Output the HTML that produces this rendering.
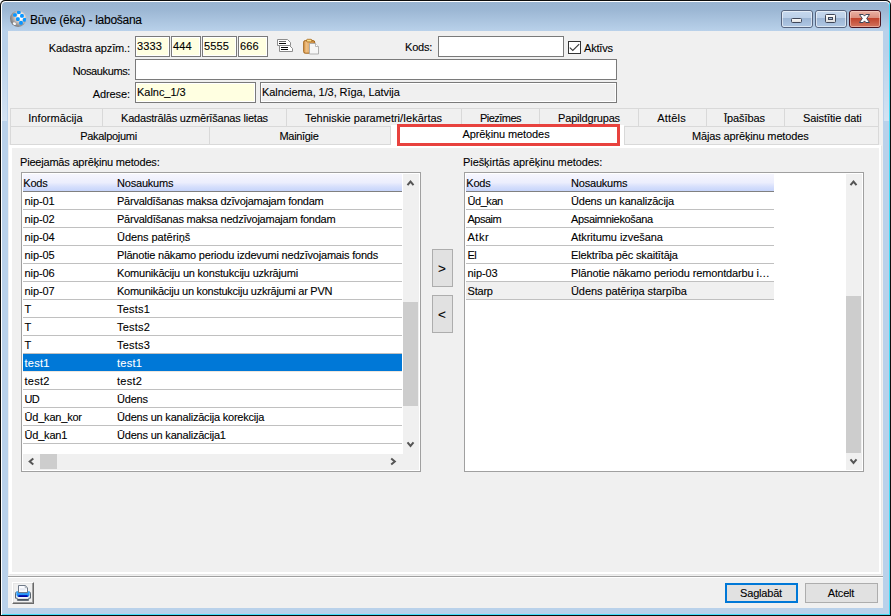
<!DOCTYPE html>
<html lang="lv">
<head>
<meta charset="utf-8">
<title>Būve (ēka) - labošana</title>
<style>
html,body{margin:0;padding:0;background:#fff;}
body{width:891px;height:616px;position:relative;overflow:hidden;font-family:"Liberation Sans",sans-serif;font-size:11px;color:#000;letter-spacing:-0.2px;-webkit-text-stroke:0.1px currentColor;}
*{box-sizing:border-box;}
.abs,.win div,.win span,.win svg{position:absolute;}
.win{position:absolute;left:0;top:0;width:891px;height:616px;background:#0c0c0c;border-radius:5px 5px 0 0;overflow:hidden;}
.hl{left:1px;top:1px;width:889px;height:614px;border-radius:4.5px 4.5px 0 0;background:#fff;}
.hl2{left:2px;top:2px;width:888px;height:613px;border-radius:4px 4.5px 0 0;background:#45dcf7;}
.frame{left:2px;top:2px;width:887px;height:612px;border-radius:4px 3.5px 0 0;background:linear-gradient(to bottom,#99b4d1 0,#9cb7d4 8px,#b9d1ea 29px,#b9d1ea 100%);}
.lfade{top:50px;width:5px;height:71px;background:linear-gradient(to bottom,rgba(255,255,255,0),rgba(255,255,255,.38));}
.title{left:30px;top:11px;font-size:12px;line-height:18px;white-space:nowrap;color:#000;letter-spacing:-0.27px;}
.client{left:8px;top:31px;width:875px;height:577px;background:#f0f0f0;}
.cap{top:10px;height:18px;border-radius:3px;border:1px solid #56647e;}
.cap i{position:absolute;left:0;top:0;right:0;bottom:0;border-radius:2px;border:1px solid rgba(255,255,255,.55);}
.cap.n{background:linear-gradient(to bottom,#c6d8ee 0,#bcd0e8 43%,#9cb5d4 44%,#b0c8e4 100%);}
.cap.x{border-color:#4a1420;background:linear-gradient(to bottom,#eab1a3 0,#dc8f7e 43%,#c0412a 44%,#d2745e 100%);}
.cap.x i{border-color:rgba(255,220,210,.5);}
.lbl{white-space:nowrap;line-height:13px;}
.lbl.r{left:0;width:130px;text-align:right;}
.inp{height:21px;border:1px solid #7a7a7a;background:#fff;white-space:nowrap;overflow:hidden;}
.inp b{position:absolute;left:1px;top:1px;right:1px;bottom:1px;background:#ffffe1;font-weight:normal;}
.inp.ro b{background:#f0f0f0;}
.inp span{left:1px;top:3px;line-height:13px;}
.tab{border:1px solid #d9d9d9;background:#f0f0f0;text-align:center;line-height:13px;padding-top:3px;white-space:nowrap;}
.page{left:9px;top:145px;width:872px;height:429px;background:#fff;box-shadow:1px 1px 0 #e6e6e6;}
.page .in{left:3px;top:3px;width:867px;height:424px;background:#f0f0f0;}
.list{border:1px solid #a0a0a0;background:#fff;overflow:hidden;}
.hdr{left:1px;top:1px;height:18px;background:linear-gradient(to bottom,#f6f6fe 0,#eceefd 50%,#d6dffc 75%,#c6d4fb 100%);border-bottom:1px solid #808080;}
.hdr span{top:3px;line-height:13px;}
.row{left:1px;height:18px;border-bottom:1px solid #c0c0c0;white-space:nowrap;}
.row{right:0;}
.rows{overflow:hidden;}
.row span{top:3px;line-height:13px;}
.row .c1{left:1.5px;}
.row .c2{left:94px;}
.rows.r .c2{left:105px;}
.row.sel{background:#0078d7;color:#fff;border-bottom-color:#efe6dd;}
.row.gray{background:#f0f0f0;}
.sb{background:#f0f0f0;}
.thumb{background:#cdcdcd;}
.btn{border:1px solid #adadad;background:#e1e1e1;text-align:center;white-space:nowrap;}
</style>
</head>
<body>
<div class="win">
<div class="hl"></div>
<div style="left:889px;top:3px;width:1px;height:612px;background:#45dcf7"></div>
<div style="left:2px;top:614px;width:888px;height:1px;background:#45dcf7"></div>
<div class="frame"></div>
<div class="lfade" style="left:2px"></div>
<div class="lfade" style="left:884px"></div>

<!-- app icon -->
<svg style="left:9px;top:10px" width="18" height="18" viewBox="0 0 18 18">
<defs><radialGradient id="ball" cx="0.64" cy="0.38" r="0.72"><stop offset="0" stop-color="#ffffff"/><stop offset="0.2" stop-color="#ffffff"/><stop offset="0.42" stop-color="#dccfc8"/><stop offset="0.75" stop-color="#929295"/><stop offset="1" stop-color="#6f6f73"/></radialGradient>
<clipPath id="bc"><circle cx="9.1" cy="8.8" r="8"/></clipPath></defs>
<circle cx="9.1" cy="8.8" r="8.1" fill="url(#ball)"/>
<ellipse cx="5.4" cy="13.6" rx="1.7" ry="1.2" fill="#fff" opacity=".95" transform="rotate(30 5.4 13.6)"/>
<g fill="#0a96ff" clip-path="url(#bc)">
<rect x="4.11" y="3.14" width="3.7" height="3.7" rx="1.3"/><rect x="8.01" y="0.41" width="3.7" height="3.7" rx="1.3"/><rect x="11.12" y="4.11" width="3.7" height="3.7" rx="1.3"/>
<rect x="7.03" y="7.23" width="3.7" height="3.7" rx="1.3"/><rect x="10.15" y="11.12" width="3.7" height="3.7" rx="1.3"/><rect x="13.85" y="8.01" width="3.7" height="3.7" rx="1.3"/>
</g>
</svg>
<div class="title">Būve (ēka) - labošana</div>

<!-- caption buttons -->
<div class="cap n" style="left:781px;width:32px"><i></i>
<svg style="left:8px;top:6px" width="13" height="7" viewBox="0 0 13 7"><defs><linearGradient id="gw" x1="0" x2="0" y1="0" y2="1"><stop offset="0" stop-color="#ffffff"/><stop offset="1" stop-color="#dcdcdc"/></linearGradient></defs><rect x="1.5" y="1.5" width="10" height="4" rx="1" fill="url(#gw)" stroke="#3f4658" stroke-width="1"/></svg></div>
<div class="cap n" style="left:815px;width:32px"><i></i>
<svg style="left:8px;top:2px" width="13" height="11" viewBox="0 0 13 11"><rect x="1.5" y="1.5" width="10" height="8" rx="1" fill="url(#gw)" stroke="#3f4658" stroke-width="1"/><rect x="4.5" y="4.5" width="4" height="2" fill="#a9c0dc" stroke="#3f4658" stroke-width="1"/></svg></div>
<div class="cap x" style="left:849px;width:32px"><i></i>
<svg style="left:8px;top:2px" width="13" height="11" viewBox="-1 -1 13 11"><path d="M0.5 0.5 H4.2 L5.5 2.1 L6.8 0.5 H10.5 L7.7 4.5 L10.5 8.5 H6.8 L5.5 6.9 L4.2 8.5 H0.5 L3.3 4.5 Z" fill="#fff" stroke="#3d4659" stroke-width="1" stroke-linejoin="round"/></svg></div>

<div class="client">
</div>

<!-- form -->
<div class="lbl r" style="top:42px;letter-spacing:-0.12px">Kadastra apzīm.:</div>
<div class="inp" style="left:135px;top:36px;width:35px"><b></b><span style="letter-spacing:0.1px">3333</span></div>
<div class="inp" style="left:171px;top:36px;width:30px"><b></b><span style="letter-spacing:0.1px">444</span></div>
<div class="inp" style="left:202px;top:36px;width:35px"><b></b><span style="letter-spacing:0.1px">5555</span></div>
<div class="inp" style="left:238px;top:36px;width:30px"><b></b><span style="letter-spacing:0.1px">666</span></div>

<!-- copy icon -->
<svg style="left:277px;top:39px" width="17" height="14" viewBox="0 0 17 14">
<path d="M0.5 0.5 H10.5 L13.5 3.5 V6.5 H0.5 Z" fill="#fff" stroke="#8c8c8c"/>
<path d="M2.5 6.5 H12.5 L15.5 9.5 V12.5 H2.5 Z" fill="#fff" stroke="#8c8c8c"/>
<path d="M2 2.5 H9" stroke="#666" stroke-width="1"/>
<path d="M2 4.5 H9 M4 8.5 H11 M4 10.5 H11" stroke="#0a0a0a" stroke-width="1"/>
</svg>
<!-- paste icon -->
<svg style="left:303px;top:38px" width="17" height="17" viewBox="0 0 17 17">
<defs><linearGradient id="clip" x1="0" x2="1" y1="0" y2="0"><stop offset="0" stop-color="#d99a4c"/><stop offset="0.25" stop-color="#efc085"/><stop offset="1" stop-color="#c8893a"/></linearGradient></defs>
<rect x="0.7" y="2.6" width="11" height="12.6" rx="1.5" fill="url(#clip)" stroke="#a3651a" stroke-width="1"/>
<rect x="3.6" y="1.3" width="5.2" height="2.6" rx=".8" fill="#fbe08c" stroke="#a3651a" stroke-width=".8"/>
<path d="M6.5 5.5 H12.5 L15.5 8.5 V16 H6.5 Z" fill="#f6f6f6" stroke="#a8a8a8" stroke-width=".9"/>
<path d="M12.5 5.5 V8.5 H15.5" fill="#fff" stroke="#a8a8a8" stroke-width=".8"/>
</svg>

<div class="lbl" style="left:405px;top:41px">Kods:</div>
<div class="inp" style="left:438px;top:36px;width:126px"></div>
<div style="left:568px;top:41px;width:13px;height:13px;border:1px solid #333;background:#fff"></div>
<svg style="left:568px;top:41px" width="13" height="13" viewBox="0 0 13 13"><path d="M1.8 6.6 L4.8 9.5 L11.2 3.1" fill="none" stroke="#3a3a3a" stroke-width="1.1"/></svg>
<div class="lbl" style="left:584px;top:42px">Aktīvs</div>

<div class="lbl r" style="top:65px;letter-spacing:-0.38px">Nosaukums:</div>
<div class="inp" style="left:135px;top:59px;width:482px"></div>

<div class="lbl r" style="top:88px;letter-spacing:-0.1px">Adrese:</div>
<div class="inp" style="left:135px;top:82px;width:121px"><b></b><span style="letter-spacing:-0.03px">Kalnc_1/3</span></div>
<div class="inp ro" style="left:260px;top:82px;width:357px"><b></b><span style="letter-spacing:-0.08px">Kalnciema, 1/3, Rīga, Latvija</span></div>

<!-- tabs -->
<div class="tab" style="left:10px;top:108px;width:93px;height:19px;letter-spacing:0.07px;padding-right:2px">Informācija</div>
<div class="tab" style="left:102px;top:108px;width:185px;height:19px">Kadastrālās uzmērīšanas lietas</div>
<div class="tab" style="left:286px;top:108px;width:176px;height:19px;letter-spacing:-0.02px;padding-right:1px">Tehniskie parametri/Iekārtas</div>
<div class="tab" style="left:461px;top:108px;width:79px;height:19px;letter-spacing:-0.53px">Piezīmes</div>
<div class="tab" style="left:539px;top:108px;width:100px;height:19px">Papildgrupas</div>
<div class="tab" style="left:638px;top:108px;width:69px;height:19px;letter-spacing:0.2px;padding-right:2px">Attēls</div>
<div class="tab" style="left:706px;top:108px;width:79px;height:19px;letter-spacing:-0.08px;padding-right:2px">Īpašības</div>
<div class="tab" style="left:784px;top:108px;width:95px;height:19px;letter-spacing:-0.1px;padding-left:1.5px">Saistītie dati</div>
<div class="tab" style="left:10px;top:126px;width:200px;height:19px;letter-spacing:-0.3px;padding-right:3px">Pakalpojumi</div>
<div class="tab" style="left:209px;top:126px;width:182px;height:19px;letter-spacing:-0.33px;padding-right:2px">Mainīgie</div>
<div class="tab" style="left:624px;top:126px;width:255px;height:19px;letter-spacing:-0.15px;padding-right:2.5px">Mājas aprēķinu metodes</div>
<div class="page"><div class="in"></div></div>
<div style="left:391px;top:125px;width:233px;height:22px;background:#fff;"></div>
<div style="left:397px;top:124px;width:223px;height:22px;border:3px solid #e8423e;background:#fff;text-align:center;line-height:14px;white-space:nowrap;padding-right:5px;letter-spacing:-0.1px">Aprēķinu metodes</div>

<!-- left list -->
<div class="lbl" style="left:20px;top:156px">Pieejamās aprēķinu metodes:</div>
<div class="list" style="left:21px;top:172px;width:400px;height:300px">
<div class="hdr" style="width:379px"><span style="left:0.3px">Kods</span><span style="left:94px">Nosaukums</span></div>
<div class="rows" style="left:0;top:0;width:380px;height:298px">
<div class="row" style="top:19px"><span class="c1" style="letter-spacing:-0.08px">nip-01</span><span class="c2" style="letter-spacing:-0.24px">Pārvaldīšanas maksa dzīvojamajam fondam</span></div>
<div class="row" style="top:37px"><span class="c1" style="letter-spacing:-0.08px">nip-02</span><span class="c2" style="letter-spacing:-0.235px">Pārvaldīšanas maksa nedzīvojamajam fondam</span></div>
<div class="row" style="top:55px"><span class="c1" style="letter-spacing:-0.08px">nip-04</span><span class="c2" style="letter-spacing:-0.06px">Ūdens patēriņš</span></div>
<div class="row" style="top:73px"><span class="c1" style="letter-spacing:-0.08px">nip-05</span><span class="c2">Plānotie nākamo periodu izdevumi nedzīvojamais fonds</span></div>
<div class="row" style="top:91px"><span class="c1" style="letter-spacing:-0.08px">nip-06</span><span class="c2">Komunikāciju un konstukciju uzkrājumi</span></div>
<div class="row" style="top:109px"><span class="c1" style="letter-spacing:-0.08px">nip-07</span><span class="c2" style="letter-spacing:-0.265px">Komunikāciju un konstukciju uzkrājumi ar PVN</span></div>
<div class="row" style="top:127px"><span class="c1">T</span><span class="c2" style="letter-spacing:0.2px">Tests1</span></div>
<div class="row" style="top:145px"><span class="c1">T</span><span class="c2" style="letter-spacing:0.2px">Tests2</span></div>
<div class="row" style="top:163px"><span class="c1">T</span><span class="c2" style="letter-spacing:0.2px">Tests3</span></div>
<div class="row sel" style="top:181px"><span class="c1" style="letter-spacing:0.25px">test1</span><span class="c2" style="letter-spacing:0.25px">test1</span></div>
<div class="row" style="top:199px"><span class="c1" style="letter-spacing:0.25px">test2</span><span class="c2" style="letter-spacing:0.25px">test2</span></div>
<div class="row" style="top:217px"><span class="c1" style="letter-spacing:-0.7px">UD</span><span class="c2">Ūdens</span></div>
<div class="row" style="top:235px"><span class="c1">Ūd_kan_kor</span><span class="c2">Ūdens un kanalizācija korekcija</span></div>
<div class="row" style="top:253px"><span class="c1">Ūd_kan1</span><span class="c2">Ūdens un kanalizācija1</span></div>
</div>
<div class="sb" style="left:381px;top:1px;width:16px;height:280px"></div>
<div class="thumb" style="left:381px;top:129px;width:15px;height:104px"></div>
<svg style="left:383px;top:6px" width="10" height="8" viewBox="-0.5 0 10 8"><path d="M2 6.2 L5 2.6 L8 6.2" fill="none" stroke="#555" stroke-width="2"/></svg>
<svg style="left:383px;top:268px" width="10" height="8" viewBox="-0.5 0 10 8"><path d="M2 1.4 L5 5 L8 1.4" fill="none" stroke="#555" stroke-width="2"/></svg>
<div class="sb" style="left:1px;top:281px;width:396px;height:16px"></div>
<div class="thumb" style="left:18px;top:281px;width:17px;height:15px"></div>
<svg style="left:5px;top:283px" width="9" height="11" viewBox="-0.5 -0.5 9 11"><path d="M5.8 2 L2.2 5 L5.8 8" fill="none" stroke="#555" stroke-width="2"/></svg>
<svg style="left:367px;top:283px" width="8" height="11" viewBox="0 -0.5 8 11"><path d="M2.2 2 L5.8 5 L2.2 8" fill="none" stroke="#555" stroke-width="2"/></svg>
</div>

<!-- move buttons -->
<div class="btn" style="left:432px;top:249px;width:21px;height:38px;line-height:37px;font-size:13.5px;letter-spacing:0;padding-right:1px">&gt;</div>
<div class="btn" style="left:432px;top:295px;width:21px;height:38px;line-height:37px;font-size:13.5px;letter-spacing:0;padding-right:1px">&lt;</div>

<!-- right list -->
<div class="lbl" style="left:463px;top:156px;letter-spacing:-0.07px">Piešķirtās aprēķinu metodes:</div>
<div class="list" style="left:464px;top:172px;width:400px;height:300px">
<div class="hdr" style="width:308px"><span style="left:0.3px">Kods</span><span style="left:105px">Nosaukums</span></div>
<div class="rows r" style="left:0;top:0;width:309px;height:298px">
<div class="row" style="top:19px"><span class="c1" style="letter-spacing:-0.45px">Ūd_kan</span><span class="c2">Ūdens un kanalizācija</span></div>
<div class="row" style="top:37px"><span class="c1" style="letter-spacing:-0.5px">Apsaim</span><span class="c2" style="letter-spacing:-0.33px">Apsaimniekošana</span></div>
<div class="row" style="top:55px"><span class="c1" style="letter-spacing:0.5px">Atkr</span><span class="c2" style="letter-spacing:-0.06px">Atkritumu izvešana</span></div>
<div class="row" style="top:73px"><span class="c1" style="letter-spacing:-0.5px">El</span><span class="c2" style="letter-spacing:-0.16px">Elektrība pēc skaitītāja</span></div>
<div class="row" style="top:91px"><span class="c1" style="letter-spacing:-0.08px">nip-03</span><span class="c2" style="letter-spacing:-0.13px">Plānotie nākamo periodu remontdarbu i…</span></div>
<div class="row gray" style="top:109px"><span class="c1">Starp</span><span class="c2" style="letter-spacing:-0.07px">Ūdens patēriņa starpība</span></div>
</div>
<div class="sb" style="left:381px;top:1px;width:16px;height:296px"></div>
<div class="thumb" style="left:381px;top:123px;width:15px;height:157px"></div>
<svg style="left:383px;top:6px" width="10" height="8" viewBox="-0.5 0 10 8"><path d="M2 6.2 L5 2.6 L8 6.2" fill="none" stroke="#555" stroke-width="2"/></svg>
<svg style="left:383px;top:285px" width="10" height="8" viewBox="-0.5 0 10 8"><path d="M2 1.4 L5 5 L8 1.4" fill="none" stroke="#555" stroke-width="2"/></svg>
</div>

<!-- bottom -->
<div style="left:8px;top:576px;width:875px;height:1px;background:#a0a0a0"></div>
<div style="left:8px;top:577px;width:875px;height:1px;background:#fff"></div>
<div style="left:12px;top:582px;width:22px;height:22px;background:#f0f0f0;border-top:1px solid #fff;border-left:1px solid #fff;border-right:1px solid #696969;border-bottom:1px solid #696969;box-shadow:inset -1px -1px 0 #a0a0a0, inset 1px 1px 0 #e6e6e6;">
<svg style="left:2px;top:2px" width="16" height="16" viewBox="0 0 16 16">
<defs><linearGradient id="pb" x1="0" x2="0" y1="0" y2="1"><stop offset="0" stop-color="#3fb0ff"/><stop offset="1" stop-color="#1480f5"/></linearGradient></defs>
<path d="M0.5 8.2 Q0.5 7.2 1.5 7.2 H14.5 Q15.5 7.2 15.5 8.2 V13.2 H13.6 V15.4 H2.4 V13.2 H0.5 Z" fill="#e9eef3" stroke="#4a5560" stroke-width=".9"/>
<path d="M1.4 6.2 H3.2 V7.6 H12.8 V6.2 H14.6 V9.6 Q14.6 12 12.4 12 H3.6 Q1.4 12 1.4 9.6 Z" fill="url(#pb)"/>
<rect x="3.4" y="10.2" width="9.2" height="1.8" fill="#0006a6"/>
<path d="M3.5 0.5 H10.2 L12.5 2.8 V7.6 H3.5 Z" fill="#fbfcff" stroke="#5f6b7a" stroke-width=".9"/>
<path d="M10.2 0.5 V2.8 H12.5" fill="none" stroke="#8a94a0" stroke-width=".7"/>
<rect x="5" y="3.2" width="5.5" height="2.2" fill="#e6eaf3"/>
<rect x="2.6" y="12.3" width="10.8" height="1.3" fill="#f8fafc"/>
<rect x="3" y="13.9" width="10" height="1.3" fill="#4a5560"/>
</svg>
</div>
<div class="btn" style="left:725px;top:583px;width:73px;height:20px;border:2px solid #0078d7;line-height:13px;padding-top:2px;padding-right:1px">Saglabāt</div>
<div class="btn" style="left:805px;top:583px;width:73px;height:20px;line-height:13px;padding-top:3px;padding-right:1px">Atcelt</div>

</div>
</body>
</html>
